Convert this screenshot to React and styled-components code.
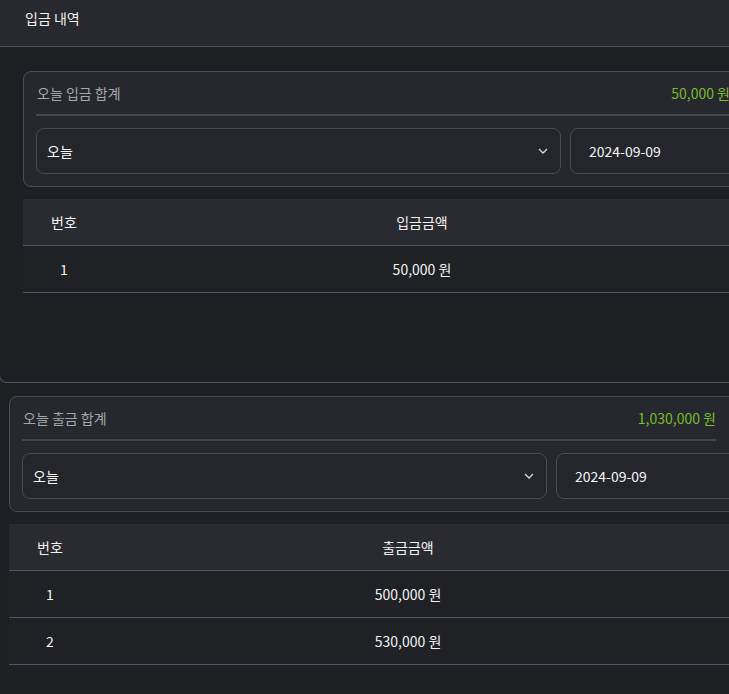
import React from 'react';
import styled, { createGlobalStyle } from 'styled-components';

const GlobalStyle = createGlobalStyle`
  html, body {
    margin: 0;
    background: #1e1f23;
    overflow: hidden;
  }
  body {
    font-family: "Noto Sans CJK KR", "Noto Sans", sans-serif;
    color: #eeeeee;
    font-size: 14px;
  }
  * { box-sizing: border-box; }
`;

const Page = styled.div`
  width: 729px;
  height: 694px;
  overflow: hidden;
`;

const Panel = styled.section`
  width: 800px;
  margin-left: -1px;
  background: #1e1f23;
  border: 1px solid #55565b;
  border-top: none;
  border-radius: 0 0 8px 8px;
`;

const PanelHeader = styled.header`
  height: 47px;
  display: flex;
  align-items: flex-start;
  padding: 8px 0 0 25px;
  background: #28292e;
  border-bottom: 1px solid #505156;
  font-size: 14px;
  color: #f2f2f2;
`;

const PanelBody = styled.div`
  height: 335px;
  padding: 24px 0 0 23px;
`;

const Section = styled.section`
  padding: 13px 0 0 9px;
`;

const Card = styled.div`
  width: 760px;
  background: #27282d;
  border: 1px solid #4c4d52;
  border-radius: 8px;
  padding: 0 0 12px 12px;
`;

const TitleRow = styled.div`
  width: 694px;
  height: 44px;
  display: flex;
  align-items: center;
  justify-content: space-between;
  padding: 0 0 1px 1px;
  border-bottom: 2px solid #45464b;
`;

const CardTitle = styled.span`
  color: #a4a5a8;
`;

const Amount = styled.span`
  color: #76bd2c;
`;

const Inputs = styled.div`
  display: flex;
  gap: 9px;
  margin-top: 12px;
`;

const Field = styled.div`
  flex: 0 0 ${p => p.$w}px;
  height: 46px;
  display: flex;
  align-items: center;
  justify-content: space-between;
  padding: 0 12px 0 ${p => p.$pad}px;
  background: #25262b;
  border: 1px solid #4a4b50;
  border-radius: 8px;
  color: #f4f4f4;
`;

const Table = styled.div`
  width: 760px;
  margin-top: 12px;
`;

const Row = styled.div`
  display: grid;
  grid-template-columns: 82px 634px 1fr;
  height: 47px;
  align-items: center;
  background: ${p => (p.$head ? '#2a2b30' : '#202125')};
  border-bottom: 1px solid #55565b;
  color: #f2f2f2;
`;

const Cell = styled.span`
  text-align: center;
`;

const Chevron = () => (
  <svg width="10" height="6" viewBox="0 0 10 6" fill="none">
    <polyline points="1,1 5,5 9,1" stroke="#d8d8d8" strokeWidth="1.3" />
  </svg>
);

const Summary = ({ title, amount }) => (
  <Card>
    <TitleRow>
      <CardTitle>{title}</CardTitle>
      <Amount>{amount}</Amount>
    </TitleRow>
    <Inputs>
      <Field $w={525} $pad={10}>
        오늘
        <Chevron />
      </Field>
      <Field $w={220} $pad={18}>2024-09-09</Field>
    </Inputs>
  </Card>
);

const Ledger = ({ label, rows }) => (
  <Table>
    <Row $head>
      <Cell>번호</Cell>
      <Cell>{label}</Cell>
    </Row>
    {rows.map((r, i) => (
      <Row key={i}>
        <Cell>{i + 1}</Cell>
        <Cell>{r}</Cell>
      </Row>
    ))}
  </Table>
);

export default function App() {
  return (
    <Page>
      <GlobalStyle />
      <Panel>
        <PanelHeader>입금 내역</PanelHeader>
        <PanelBody>
          <Summary title="오늘 입금 합계" amount="50,000 원" />
          <Ledger label="입금금액" rows={['50,000 원']} />
        </PanelBody>
      </Panel>
      <Section>
        <Summary title="오늘 출금 합계" amount="1,030,000 원" />
        <Ledger label="출금금액" rows={['500,000 원', '530,000 원']} />
      </Section>
    </Page>
  );
}
